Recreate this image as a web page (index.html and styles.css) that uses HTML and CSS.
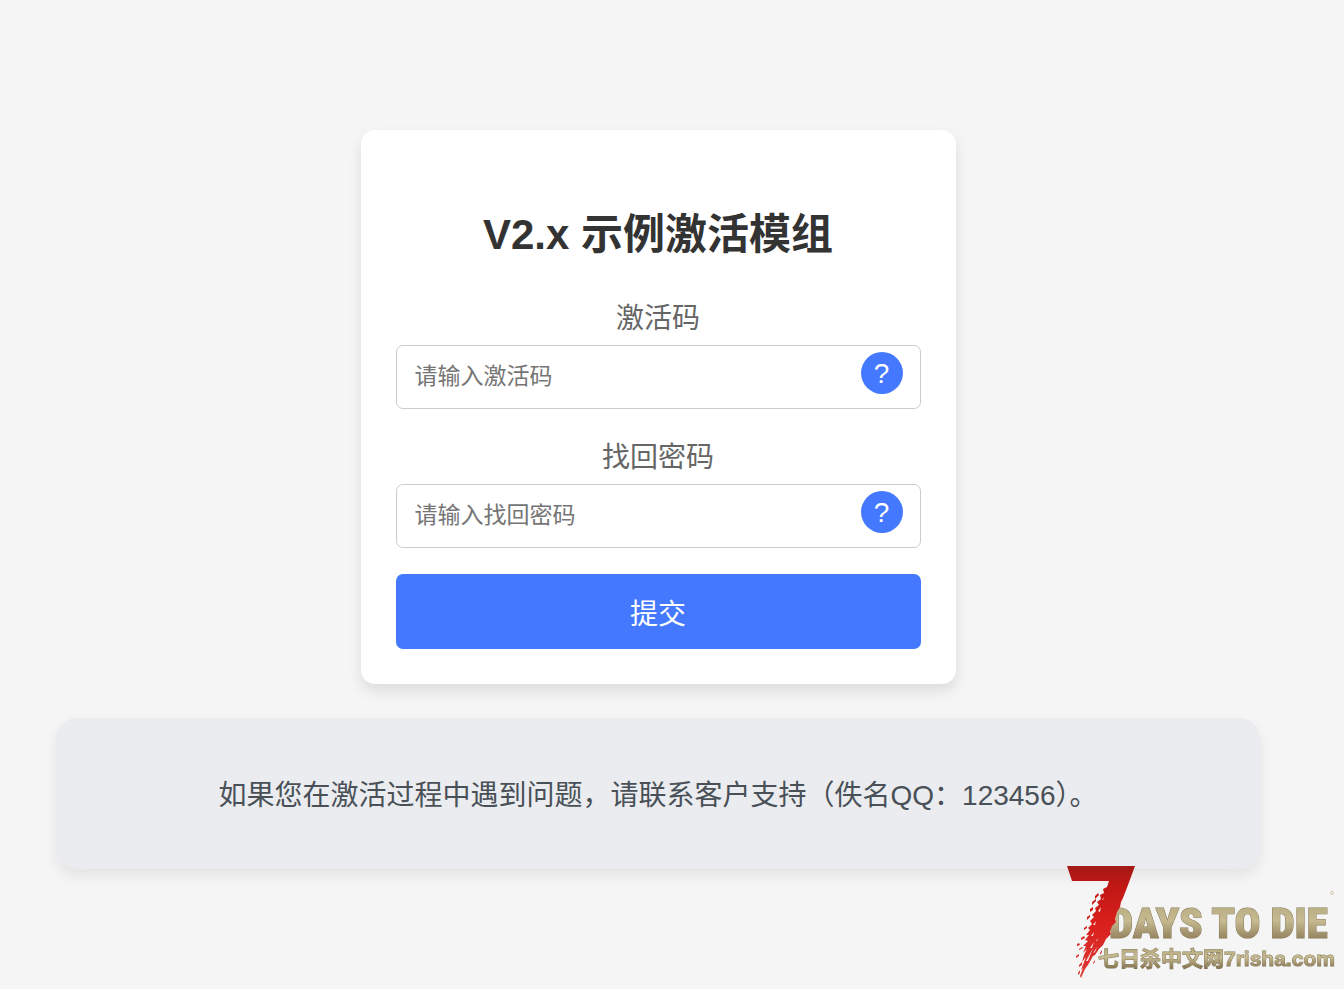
FILE: index.html
```html
<!DOCTYPE html>
<html lang="zh-CN">
<head>
<meta charset="utf-8">
<meta name="viewport" content="width=device-width, initial-scale=1">
<title>V2.x 示例激活模组</title>
<link rel="stylesheet" href="styles.css">
</head>
<body>
<main class="page">
  <form class="card">
    <h1 class="card-title">V2.x 示例激活模组</h1>
    <div class="field">
      <label class="field-label" for="code">激活码</label>
      <div class="field-box">
        <input class="field-input" id="code" type="text" placeholder="请输入激活码">
        <button class="help" type="button">?</button>
      </div>
    </div>
    <div class="field">
      <label class="field-label" for="recover">找回密码</label>
      <div class="field-box">
        <input class="field-input" id="recover" type="text" placeholder="请输入找回密码">
        <button class="help" type="button">?</button>
      </div>
    </div>
    <button class="submit" type="submit">提交</button>
  </form>
  <section class="notice">
    <p class="notice-text">如果您在激活过程中遇到问题，请联系客户支持（佚名QQ：123456）。</p>
  </section>
</main>
<svg class="logo" viewBox="0 0 280 124" width="280" height="124">
  <defs>
    <linearGradient id="gold" x1="0" y1="0" x2="0" y2="1">
      <stop offset="0" stop-color="#b3a67c"/>
      <stop offset=".45" stop-color="#c6ba90"/>
      <stop offset="1" stop-color="#7b6746"/>
    </linearGradient>
    <linearGradient id="red" gradientUnits="userSpaceOnUse" x1="0" y1="4" x2="0" y2="116">
      <stop offset="0" stop-color="#a31a17"/>
      <stop offset=".15" stop-color="#bd1714"/>
      <stop offset=".5" stop-color="#d91f1c"/>
      <stop offset="1" stop-color="#dc3a36"/>
    </linearGradient>
  </defs>
  <text class="logo-name" x="45" y="76">DAYS TO DIE</text>
  <text class="logo-site" x="34" y="104">七日杀中文网7risha.com</text>
  <g fill="url(#red)">
    <path d="M3 4H71L64 23 59 36 57 40 56 45 53 50 51 57 52 60 48 64 46 70 47 72 42 77 39 83 35 87 31 93 29 94 24 103 21 107 17 116 16 114 19 106 17 108 20 100 22 95 18 100 20 93 23 87 19 91 22 84 19 84 24 79 21 78 25 73 22 73 26 68 24 66 28 62 26 59 30 55 28 53 32 49 31 46 35 43 33 40 37 37 36 33 40 31 39 27 43 25 45 19H8Z"/>
    <path d="M31 34l3-3 1 2-4 4zM28 40l4-3 0 2-4 4zM26 47l3-2 0 3-3 2zM23 55l3-2 0 2-3 3zM20 66l3-2 0 2-3 2zM17 76l3-2 1 2-4 2zM15 87l3-2 1 1-4 2zM12 94l3-2 0 2-3 2zM13 82l2-1 1 2-3 1zM15 103l3-3 0 3-3 2zM14 111l2-3 0 3-2 2zM36 91l2-3 0 2-2 3zM29 101l2-3 0 2-2 2z"/>
  </g>
  <path d="M34 49l3-4-1 5zM29 63l3-4-1 4zM27 74l3-4-1 4zM26 86l4-6-2 6zM22 99l7-13-5 13zM29 91l4-6-2 5zM38 38l2-3-1 3zM32 79l2-3-1 3z" fill="#f5dedd"/>
  <circle cx="268" cy="31" r="1.500" fill="none" stroke="#cfc7ad"/>
</svg>
</body>
</html>
```
FILE: styles.css
```css
* {
  box-sizing: border-box;
}

body {
  margin: 0;
  min-height: 100vh;
  background: #f5f5f5;
  font-family: "Liberation Sans", "Noto Sans CJK SC", sans-serif;
  font-size: 28px;
}

.page {
  display: flex;
  flex-direction: column;
  align-items: center;
  gap: 34px;
  padding: 130px 84px 56px 56px;
}

.card {
  display: flex;
  flex-direction: column;
  gap: 26px;
  width: 100%;
  max-width: 595px;
  padding: 35px;
  border-radius: 14px;
  background: #fff;
  box-shadow: 0 7px 14px rgba(0, 0, 0, 0.1);
  text-align: center;
}

.card-title {
  margin: 40px 0 5px;
  color: #333;
  font-size: 42px;
  line-height: 60px;
}

.field {
  display: flex;
  flex-direction: column;
  gap: 3px;
}

.field-label {
  color: #666;
  line-height: 46px;
}

.field-box {
  position: relative;
}

.field-input {
  display: block;
  width: 100%;
  height: 64px;
  padding: 15px 70px 17px 18px;
  border: 1px solid #ccc;
  border-radius: 7px;
  background: #fff;
  color: #333;
  font: inherit;
  font-size: 23px;
}

.field-input::placeholder {
  color: #757575;
}

.help {
  position: absolute;
  top: 7px;
  right: 18px;
  width: 42px;
  height: 42px;
  padding: 2px 0 0;
  border: 0;
  border-radius: 50%;
  background: #4479ff;
  color: #fff;
  font: inherit;
  line-height: 40px;
}

.submit {
  width: 100%;
  padding: 20px 17px 14px;
  border: 0;
  border-radius: 7px;
  background: #4479ff;
  color: #fff;
  font: inherit;
  line-height: 41px;
}

.notice {
  width: 100%;
  padding: 58px 28px 54px;
  border-radius: 21px;
  background: #eaecef;
  box-shadow: 0 7px 14px rgba(0, 0, 0, 0.07);
  text-align: center;
}

.notice-text {
  margin: 0;
  color: #495057;
  line-height: 39px;
}

.logo {
  position: fixed;
  right: 0;
  bottom: 3px;
}

.logo-name,
.logo-site {
  fill: url(#gold);
  stroke: #857957;
  stroke-width: 1px;
  paint-order: stroke;
  font-weight: bold;
}

.logo-name {
  font-family: "Roboto Condensed", Roboto, "Liberation Sans", sans-serif;
  font-size: 43px;
  font-weight: 900;
}

.logo-site {
  font-family: "Liberation Sans", "Noto Sans CJK SC", sans-serif;
  font-size: 21px;
}
```
